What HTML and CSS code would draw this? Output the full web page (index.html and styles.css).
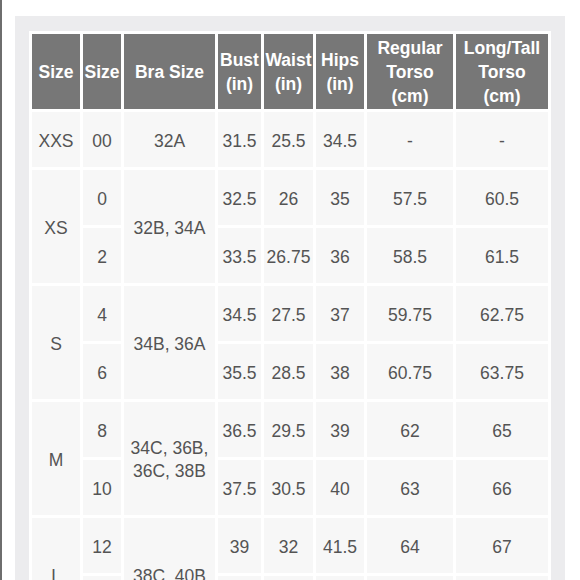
FILE: index.html
```html
<!DOCTYPE html>
<html>
<head>
<meta charset="utf-8">
<link rel="stylesheet" href="styles.css">
</head>
<body>
<div class="panel">
  <table class="chart">
    <colgroup>
      <col class="c1"><col class="c2"><col class="c3"><col class="c4"><col class="c5"><col class="c6"><col class="c7"><col class="c8">
    </colgroup>
    <thead>
      <tr class="head">
        <th>Size</th>
        <th>Size</th>
        <th>Bra Size</th>
        <th>Bust<br>(in)</th>
        <th>Waist<br>(in)</th>
        <th>Hips<br>(in)</th>
        <th>Regular<br>Torso<br>(cm)</th>
        <th>Long/Tall<br>Torso<br>(cm)</th>
      </tr>
    </thead>
    <tbody>
      <tr>
        <td>XXS</td><td>00</td><td>32A</td><td>31.5</td><td>25.5</td><td>34.5</td><td>-</td><td>-</td>
      </tr>
      <tr>
        <td rowspan="2">XS</td><td>0</td><td rowspan="2">32B, 34A</td><td>32.5</td><td>26</td><td>35</td><td>57.5</td><td>60.5</td>
      </tr>
      <tr>
        <td>2</td><td>33.5</td><td>26.75</td><td>36</td><td>58.5</td><td>61.5</td>
      </tr>
      <tr>
        <td rowspan="2">S</td><td>4</td><td rowspan="2">34B, 36A</td><td>34.5</td><td>27.5</td><td>37</td><td>59.75</td><td>62.75</td>
      </tr>
      <tr>
        <td>6</td><td>35.5</td><td>28.5</td><td>38</td><td>60.75</td><td>63.75</td>
      </tr>
      <tr>
        <td rowspan="2">M</td><td>8</td><td rowspan="2">34C, 36B,<br>36C, 38B</td><td>36.5</td><td>29.5</td><td>39</td><td>62</td><td>65</td>
      </tr>
      <tr>
        <td>10</td><td>37.5</td><td>30.5</td><td>40</td><td>63</td><td>66</td>
      </tr>
      <tr>
        <td rowspan="2">L</td><td>12</td><td rowspan="2">38C, 40B</td><td>39</td><td>32</td><td>41.5</td><td>64</td><td>67</td>
      </tr>
      <tr>
        <td>14</td><td>40.5</td><td>33.5</td><td>43</td><td>65</td><td>68</td>
      </tr>
    </tbody>
  </table>
</div>
</body>
</html>
```

FILE: styles.css
```css
html, body {
  margin: 0;
  padding: 0;
  background: #ffffff;
}

body {
  border-left: 2px solid #6e6e6e;
  min-height: 100vh;
  box-sizing: border-box;
  font-family: "Liberation Sans", Arial, sans-serif;
  font-size: 17.5px;
  color: #545454;
  padding-top: 16px;
}

.panel {
  margin-left: 13px;
  width: 550px;
  box-sizing: border-box;
  padding: 15px 14px 40px 14px;
  background: #ececee;
}

.chart {
  width: 522px;
  table-layout: fixed;
  border-collapse: separate;
  border-spacing: 3px;
  background: #ffffff;
}

.c1 { width: 48px; }
.c2 { width: 38px; }
.c3 { width: 91px; }
.c4 { width: 43px; }
.c5 { width: 49px; }
.c6 { width: 48px; }
.c7 { width: 86px; }
.c8 { width: 92px; }

.chart th,
.chart td {
  padding: 0;
  text-align: center;
  vertical-align: middle;
  white-space: nowrap;
}

.head th {
  height: 74px;
  padding-top: 1px;
  background: #777777;
  color: #ffffff;
  font-weight: bold;
  line-height: 24px;
}

.chart td {
  height: 52px;
  padding-top: 3px;
  background: #f7f7f7;
  line-height: 23px;
}
```
